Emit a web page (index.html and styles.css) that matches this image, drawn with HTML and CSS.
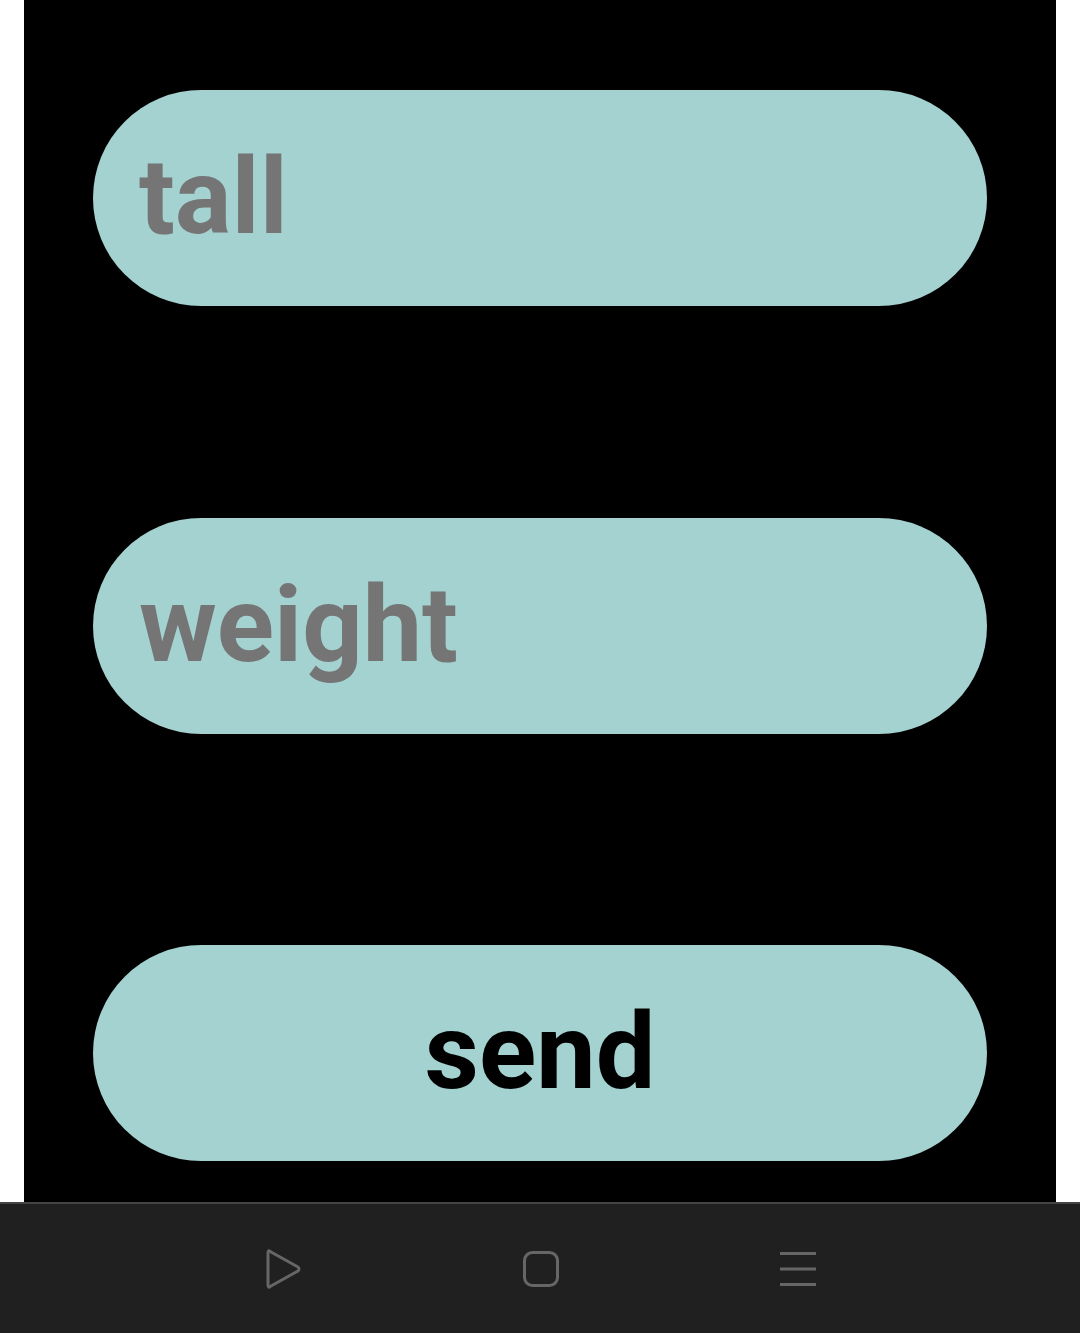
FILE: index.html
```html
<!DOCTYPE html>
<html>
<head>
<meta charset="utf-8">
<link rel="stylesheet" href="styles.css">
</head>
<body>
<div class="screen">
  <main class="panel">
    <div class="pill field">tall</div>
    <div class="pill field">weight</div>
    <div class="pill button">send</div>
  </main>
  <nav class="navbar">
    <svg class="nav-icon" width="40" height="44" viewBox="0 0 40 44">
      <path d="M4 6 Q4 2 7 5 L34 20 Q36 22 34 24 L7 39 Q4 42 4 38 Z" fill="none" stroke="#666" stroke-width="3" stroke-linejoin="round"/>
    </svg>
    <svg class="nav-icon" width="40" height="40" viewBox="0 0 40 40">
      <rect x="3.5" y="3.5" width="33" height="33" rx="8" fill="none" stroke="#666" stroke-width="3"/>
    </svg>
    <svg class="nav-icon" width="40" height="40" viewBox="0 0 40 40">
      <rect x="2" y="3" width="36" height="3" fill="#666"/>
      <rect x="2" y="18.5" width="36" height="3" fill="#666"/>
      <rect x="2" y="34" width="36" height="3" fill="#666"/>
    </svg>
  </nav>
</div>
</body>
</html>
```

FILE: styles.css
```css
html, body {
  margin: 0;
  padding: 0;
  background: #ffffff;
}
.screen {
  width: 1080px;
  height: 1333px;
  display: flex;
  flex-direction: column;
}
.panel {
  margin: 0 24px;
  height: 1202px;
  background: #000000;
  box-sizing: border-box;
  padding: 90px 69px 0;
  display: flex;
  flex-direction: column;
  gap: 211.5px;
}
.pill {
  height: 216px;
  flex-shrink: 0;
  border-radius: 108px;
  background: #a3d2d0;
  display: flex;
  align-items: center;
  font-family: Roboto, "Liberation Sans", sans-serif;
  font-weight: 700;
  font-size: 106px;
  line-height: 1;
  box-sizing: border-box;
  padding-bottom: 2px;
}
.field {
  color: #757575;
  padding-left: 46px;
}
.button {
  color: #000000;
  justify-content: center;
}
.navbar {
  flex: 1;
  background: #202020;
  border-top: 2px solid #444444;
  display: flex;
  align-items: center;
  justify-content: space-between;
  padding: 0 262px 0 264px;
}
.nav-icon {
  display: block;
}
```
